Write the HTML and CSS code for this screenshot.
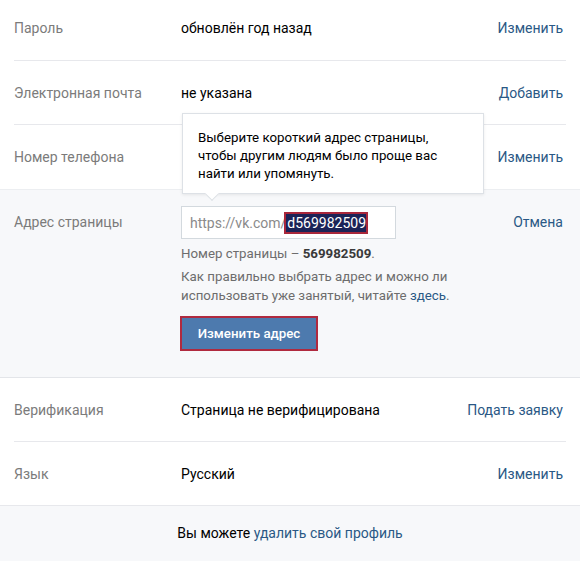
FILE: index.html
```
<!DOCTYPE html>
<html lang="ru">
<head>
<meta charset="utf-8">
<link rel="stylesheet" href="styles.css">
</head>
<body>
<div class="page">
  <div class="row row-first">
    <div class="label">Пароль</div>
    <div class="value">обновлён год назад</div>
    <a class="action">Изменить</a>
  </div>
  <div class="row">
    <div class="label">Электронная почта</div>
    <div class="value">не указана</div>
    <a class="action">Добавить</a>
  </div>
  <div class="row row-nob">
    <div class="label">Номер телефона</div>
    <div class="value"></div>
    <a class="action">Изменить</a>
  </div>
  <div class="address">
    <div class="address-inner">
      <div class="label label-addr">Адрес страницы</div>
      <div class="addr-body">
        <div class="input"><span class="prefix">https://vk.com/</span><span class="sel">d569982509</span></div>
        <div class="page-id">Номер страницы – <b>569982509</b>.</div>
        <div class="help">Как правильно выбрать адрес и можно ли использовать уже занятый, читайте <span class="help-link">здесь</span>.</div>
        <div class="btn-wrap"><button class="btn">Изменить адрес</button></div>
      </div>
      <a class="action action-addr">Отмена</a>
    </div>
  </div>
  <div class="row">
    <div class="label">Верификация</div>
    <div class="value">Страница не верифицирована</div>
    <a class="action">Подать заявку</a>
  </div>
  <div class="row row-last">
    <div class="label">Язык</div>
    <div class="value">Русский</div>
    <a class="action">Изменить</a>
  </div>
  <div class="footer">Вы можете&nbsp;<span class="link">удалить свой профиль</span></div>

  <div class="tooltip">Выберите короткий адрес страницы, чтобы другим людям было проще вас найти или упомянуть.</div>
</div>
</body>
</html>
```
FILE: styles.css
```
* { box-sizing: border-box; }
html, body { margin: 0; padding: 0; background: #fff; }
body {
  font-family: Roboto, "Noto Sans", "Liberation Sans", sans-serif;
  font-size: 14px;
  color: #000;
}
.page { position: relative; width: 580px; height: 561px; overflow: hidden; }

.row {
  display: grid;
  grid-template-columns: 167px 1fr auto;
  align-items: center;
  margin: 0 14px;
  padding-right: 3px;
  height: 64px;
  border-bottom: 1px solid #e7e8ec;
}
.row-first { height: 61px; padding-bottom: 4px; }
.row-nob { border-bottom: none; }
.row-last { margin: 0; padding: 0 17px 0 14px; }

.label { color: #7b7b7b; }
.value { color: #000; }
.action { color: #2a5885; text-decoration: none; }

.address {
  background: #f7f8fa;
  border-top: 1px solid #eceef1;
  border-bottom: 1px solid #e3e5e9;
}
.address-inner {
  display: grid;
  grid-template-columns: 167px 1fr auto;
  align-items: start;
  margin: 0 14px;
  padding: 16px 3px 26px 0;
}
.label-addr, .action-addr { line-height: 33px; }

.input {
  width: 215px;
  height: 33px;
  border: 1px solid #d3d9de;
  background: #fff;
  padding: 0 0 0 8px;
  display: flex;
  align-items: center;
  font-size: 14px;
}
.prefix { color: #8a8a8a; }
.sel {
  background: #1b2357;
  color: #fff;
  outline: 2px solid #a8273b;
  padding: 1px 0 1px 1px;
}
.page-id {
  margin-top: 6px;
  font-size: 13.3px;
  line-height: 18px;
  color: #6d6d6d;
}
.page-id b { color: #3a3a3a; font-weight: 700; }
.help {
  margin-top: 4px;
  font-size: 13.3px;
  line-height: 19px;
  color: #6d6d6d;
  width: 290px;
}
.help-link { color: #2a5885; }
.btn-wrap { margin-top: 11px; }
.btn {
  display: block;
  width: 138px;
  height: 35px;
  margin-left: -1px;
  background: #4d7aae;
  border: 2px solid #b02a3f;
  color: #fff;
  font-family: inherit;
  font-size: 13.3px;
  font-weight: 500;
  padding: 0;
}

.footer {
  background: #f7f8fa;
  height: 55px;
  display: flex;
  align-items: center;
  justify-content: center;
  padding-bottom: 2px;
  color: #000;
}
.link { color: #2a5885; }

.tooltip {
  position: absolute;
  left: 182px;
  top: 113px;
  width: 302px;
  height: 81px;
  background: #fff;
  border: 1px solid #dde1e6;
  box-shadow: 0 1px 3px rgba(0,0,0,0.08);
  padding: 15px 40px 0 15px;
  font-size: 13.3px;
  line-height: 18px;
  color: #000;
}
.tooltip::after {
  content: "";
  position: absolute;
  left: 24px;
  bottom: -6px;
  width: 9px;
  height: 9px;
  background: #fff;
  border-right: 1px solid #dde1e6;
  border-bottom: 1px solid #dde1e6;
  transform: rotate(45deg);
}
```
